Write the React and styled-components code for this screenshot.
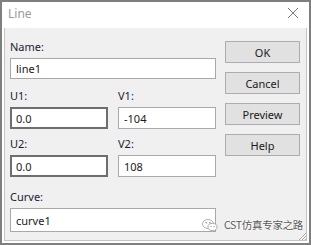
import React from 'react'
import styled, { createGlobalStyle } from 'styled-components'

const GlobalStyle = createGlobalStyle`
  html, body {
    margin: 0;
    padding: 0;
    background: #ffffff;
  }
  body {
    font-family: "Noto Sans", "Open Sans", sans-serif;
  }
`

const Window = styled.div`
  position: relative;
  box-sizing: border-box;
  width: 311px;
  height: 245px;
  border: 2px solid #7f7f7f;
  background: #ffffff;
  padding: 0 2px 2px 2px;
  display: flex;
  flex-direction: column;
  overflow: hidden;
`

const TitleBar = styled.div`
  height: 26px;
  display: flex;
  align-items: center;
  justify-content: space-between;
  padding: 0 8px 0 4px;
  flex-shrink: 0;
`

const Title = styled.span`
  font-size: 12px;
  color: #9a9a9a;
  margin-top: -4px;
`

const CloseIcon = styled.svg`
  width: 12px;
  height: 12px;
  margin-top: -4px;
`

const Body = styled.div`
  flex: 1;
  box-sizing: border-box;
  background: #f0f0f0;
  border: 1px solid #c4c4c4;
  border-top: none;
  padding: 11px 5px 0 5px;
  display: grid;
  grid-template-columns: 206px 75px;
  column-gap: 9px;
  align-items: start;
`

const Form = styled.div`
  display: flex;
  flex-direction: column;
`

const Row = styled.div`
  display: grid;
  grid-template-columns: ${p => (p.$split ? '1fr 1fr' : '1fr')};
  column-gap: 10px;
  margin-top: ${p => p.$top || 0}px;
`

const Field = styled.div`
  display: flex;
  flex-direction: column;
`

const Label = styled.label`
  font-size: 11px;
  line-height: 15px;
  height: 15px;
  color: #1c1c34;
  margin-bottom: 4px;
`

const Input = styled.div`
  box-sizing: border-box;
  height: ${p => p.$h || 21}px;
  background: #ffffff;
  border: ${p => (p.$dark ? '2px solid #6e6e6e' : '1px solid #a9a9a9')};
  padding-left: ${p => (p.$dark ? 4 : 5)}px;
  display: flex;
  align-items: center;
  font-size: 11px;
  color: #1a1a1a;
`

const Buttons = styled.div`
  display: flex;
  flex-direction: column;
  gap: 9px;
  margin-top: 2px;
`

const Button = styled.div`
  box-sizing: border-box;
  height: 22px;
  background: #e1e1e1;
  border: 1px solid #adadad;
  display: flex;
  align-items: center;
  justify-content: center;
  font-size: 11px;
  color: #1a1a1a;
`

const Watermark = styled.div`
  position: absolute;
  left: 200px;
  top: 215px;
  display: flex;
  align-items: center;
  gap: 6px;
  font-family: "Noto Sans CJK SC", "Noto Sans", sans-serif;
  font-size: 10.5px;
  color: #5a5a5a;
  text-shadow: 0 0 2px #ffffff, 0 0 2px #ffffff;
  letter-spacing: -0.3px;
`

const Grip = styled.svg`
  position: absolute;
  right: 2px;
  bottom: 2px;
  width: 10px;
  height: 10px;
`

export default function App() {
  return (
    <>
      <GlobalStyle />
      <Window>
        <TitleBar>
          <Title>Line</Title>
          <CloseIcon viewBox="0 0 12 12">
            <path d="M1 1 L11 11 M11 1 L1 11" stroke="#7a7a7a" strokeWidth="1" fill="none" />
          </CloseIcon>
        </TitleBar>
        <Body>
          <Form>
            <Row>
              <Field>
                <Label>Name:</Label>
                <Input>line1</Input>
              </Field>
            </Row>
            <Row $split $top={9}>
              <Field>
                <Label>U1:</Label>
                <Input $dark $h={22}>0.0</Input>
              </Field>
              <Field>
                <Label>V1:</Label>
                <Input $h={22}>-104</Input>
              </Field>
            </Row>
            <Row $split $top={7}>
              <Field>
                <Label>U2:</Label>
                <Input $dark $h={22}>0.0</Input>
              </Field>
              <Field>
                <Label>V2:</Label>
                <Input $h={22}>108</Input>
              </Field>
            </Row>
            <Row $top={12}>
              <Field>
                <Label>Curve:</Label>
                <Input $h={24}>curve1</Input>
              </Field>
            </Row>
          </Form>
          <Buttons>
            <Button>OK</Button>
            <Button>Cancel</Button>
            <Button>Preview</Button>
            <Button>Help</Button>
          </Buttons>
        </Body>
        <Watermark>
          <svg width="16" height="14" viewBox="0 0 16 14">
            <ellipse cx="6" cy="6" rx="5.5" ry="4.5" fill="#ffffff" stroke="#9a9a9a" strokeWidth="0.8" />
            <ellipse cx="10.5" cy="9" rx="4.5" ry="3.6" fill="#ffffff" stroke="#9a9a9a" strokeWidth="0.8" />
            <circle cx="4.2" cy="4.8" r="0.8" fill="#8a8a8a" />
            <circle cx="7.8" cy="4.8" r="0.8" fill="#8a8a8a" />
            <circle cx="9" cy="8.6" r="0.6" fill="#8a8a8a" />
            <circle cx="12" cy="8.6" r="0.6" fill="#8a8a8a" />
          </svg>
          <span>CST仿真专家之路</span>
        </Watermark>
        <Grip viewBox="0 0 10 10">
          <path d="M9 2 L2 9 M9 5 L5 9 M9 8 L8 9" stroke="#b0b0b0" strokeWidth="1" />
        </Grip>
      </Window>
    </>
  )
}
